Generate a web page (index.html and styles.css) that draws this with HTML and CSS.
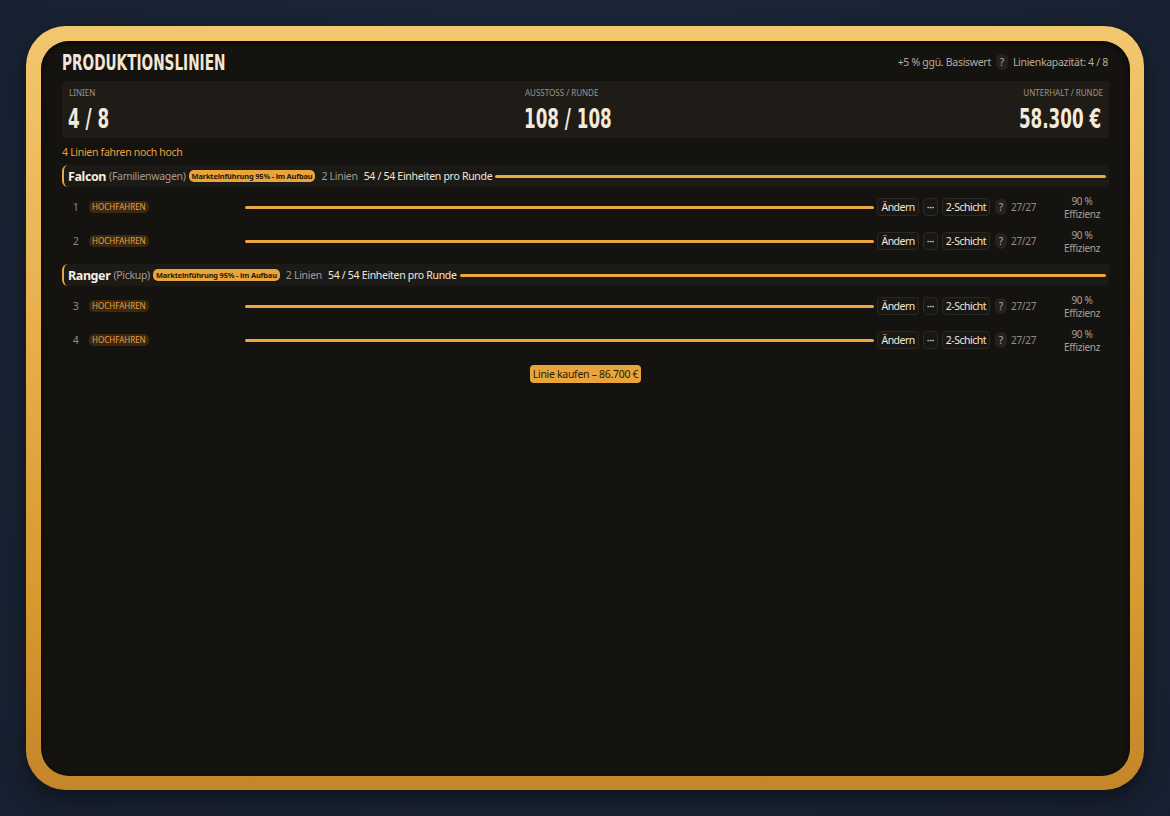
FILE: index.html
```html
<!DOCTYPE html>
<html lang="de">
<head>
<meta charset="utf-8">
<title>Produktionslinien</title>
<link rel="stylesheet" href="styles.css">
</head>
<body>
<div class="frame">
  <div class="panel">
    <header class="head">
      <h1 class="title"><span>PRODUKTIONSLINIEN</span></h1>
      <div class="head-meta">
        <span>+5 % ggü. Basiswert</span>
        <span class="q">?</span>
        <span>Linienkapazität: 4 / 8</span>
      </div>
    </header>

    <section class="stats">
      <div class="stat left">
        <div class="stat-label">LINIEN</div>
        <div class="stat-value"><span>4 / 8</span></div>
      </div>
      <div class="stat center">
        <div class="stat-label">AUSSTOSS / RUNDE</div>
        <div class="stat-value"><span>108 / 108</span></div>
      </div>
      <div class="stat right">
        <div class="stat-label">UNTERHALT / RUNDE</div>
        <div class="stat-value"><span>58.300 €</span></div>
      </div>
    </section>

    <div class="notice">4 Linien fahren noch hoch</div>

    <div class="list">
      <div class="group">
        <b class="g-name">Falcon</b>
        <span class="g-type">(Familienwagen)</span>
        <span class="g-badge">Markteinführung 95% - im Aufbau</span>
        <span class="g-count">2 Linien</span>
        <span class="g-out">54 / 54 Einheiten pro Runde</span>
        <span class="g-bar"></span>
      </div>
      <div class="line">
        <span class="l-num">1</span>
        <span class="l-status"><span class="l-badge">HOCHFAHREN</span></span>
        <span class="l-bar"></span>
        <span class="btn">Ändern</span>
        <span class="btn">···</span>
        <span class="btn">2-Schicht</span>
        <span class="q">?</span>
        <span class="l-cap">27/27</span>
        <span class="l-eff">90 %<br>Effizienz</span>
      </div>
      <div class="line">
        <span class="l-num">2</span>
        <span class="l-status"><span class="l-badge">HOCHFAHREN</span></span>
        <span class="l-bar"></span>
        <span class="btn">Ändern</span>
        <span class="btn">···</span>
        <span class="btn">2-Schicht</span>
        <span class="q">?</span>
        <span class="l-cap">27/27</span>
        <span class="l-eff">90 %<br>Effizienz</span>
      </div>

      <div class="group second">
        <b class="g-name">Ranger</b>
        <span class="g-type">(Pickup)</span>
        <span class="g-badge">Markteinführung 95% - im Aufbau</span>
        <span class="g-count">2 Linien</span>
        <span class="g-out">54 / 54 Einheiten pro Runde</span>
        <span class="g-bar"></span>
      </div>
      <div class="line">
        <span class="l-num">3</span>
        <span class="l-status"><span class="l-badge">HOCHFAHREN</span></span>
        <span class="l-bar"></span>
        <span class="btn">Ändern</span>
        <span class="btn">···</span>
        <span class="btn">2-Schicht</span>
        <span class="q">?</span>
        <span class="l-cap">27/27</span>
        <span class="l-eff">90 %<br>Effizienz</span>
      </div>
      <div class="line">
        <span class="l-num">4</span>
        <span class="l-status"><span class="l-badge">HOCHFAHREN</span></span>
        <span class="l-bar"></span>
        <span class="btn">Ändern</span>
        <span class="btn">···</span>
        <span class="btn">2-Schicht</span>
        <span class="q">?</span>
        <span class="l-cap">27/27</span>
        <span class="l-eff">90 %<br>Effizienz</span>
      </div>
    </div>

    <div class="buy-row">
      <span class="buy">Linie kaufen – 86.700 €</span>
    </div>
  </div>
</div>
</body>
</html>
```

FILE: styles.css
```css
* { box-sizing: border-box; }
html, body { height: 100%; }
body {
  margin: 0;
  background: radial-gradient(ellipse at 50% 40%, #1e2a3c 0%, #1a2434 60%, #172030 100%);
  font-family: "Noto Sans", "Open Sans", sans-serif;
  color: #f2e8d8;
  padding: 26px 26px 0 26px;
  letter-spacing: -0.3px;
}
.frame {
  width: 1118px;
  height: 764px;
  border-radius: 40px;
  background: linear-gradient(180deg, #f2c76e 0%, #e9b250 35%, #d8992f 75%, #c4862a 100%);
  padding: 15px 14px 14px 15px;
  box-shadow: 0 8px 24px rgba(0,0,0,0.45);
}
.panel {
  height: 100%;
  border-radius: 28px;
  background: #151310;
  box-shadow: inset 0 2px 6px rgba(0,0,0,0.6);
  padding: 9px 21px 0 21px;
}
.head {
  display: flex;
  align-items: center;
  justify-content: space-between;
  height: 24px;
}
.title {
  margin: 0;
  font-family: "Liberation Sans Narrow", "DejaVu Sans Condensed", sans-serif;
  font-weight: 700;
  font-size: 22px;
  line-height: 24px;
  color: #f2e6d6;
  white-space: nowrap;
  letter-spacing: 0;
  padding-top: 2px;
}
.title span {
  display: inline-block;
  transform: scaleX(0.69);
  transform-origin: left center;
}
.head-meta {
  display: flex;
  align-items: center;
  gap: 5px;
  font-size: 10.5px;
  color: #b5ac9e;
  padding-right: 1px;
}
.q {
  display: inline-flex;
  align-items: center;
  justify-content: center;
  width: 12px;
  height: 16px;
  border-radius: 6px 6px 7px 7px;
  background: #25221e;
  color: #b5ac9e;
  font-size: 10px;
  letter-spacing: 0;
}
.stats {
  margin-top: 7px;
  display: flex;
  justify-content: space-between;
  background: #1f1c18;
  border-radius: 4px;
  padding: 6px 6px 5px 6px;
  height: 57px;
}
.stat.left { width: 44px; }
.stat.center { width: 85px; }
.stat.right { width: 82px; text-align: right; }
.stat-label {
  font-size: 8px;
  line-height: 12px;
  color: #9e958a;
  letter-spacing: 0;
  padding-left: 1px;
  white-space: nowrap;
}
.stat-value {
  display: flex;
  font-family: "Liberation Sans Narrow", "DejaVu Sans Condensed", sans-serif;
  font-weight: 700;
  font-size: 27px;
  line-height: 32px;
  margin-top: 4px;
  color: #f4ead9;
  white-space: nowrap;
  letter-spacing: 0;
}
.stat-value span {
  flex: none;
  display: inline-block;
  transform: scaleX(0.69);
  transform-origin: left center;
}
.stat.right .stat-value { justify-content: flex-end; }
.stat.right .stat-value span { transform-origin: right center; margin-right: 2px; }
.notice {
  margin-top: 7px;
  font-size: 10.5px;
  line-height: 15px;
  color: #eaa13c;
}
.list {
  margin-top: 5px;
  display: flex;
  flex-direction: column;
  gap: 6px;
}
.group {
  display: flex;
  align-items: center;
  height: 22px;
  background: #1c1a16;
  border-left: 2px solid #eaa53e;
  border-radius: 6px 3px 3px 6px;
  padding: 0 3px 0 4px;
  white-space: nowrap;
}
.group.second { margin-top: 3px; }
.g-name { font-size: 12.5px; font-weight: 700; color: #f6eee0; letter-spacing: -0.4px; }
.g-type { font-size: 10.5px; color: #a49b8e; margin-left: 3px; }
.g-badge {
  margin-left: 3px;
  background: #e9a53c;
  color: #2a1a06;
  font-size: 7.5px;
  font-weight: 700;
  padding: 1px 3px;
  border-radius: 5px;
  line-height: 10px;
  letter-spacing: -0.2px;
}
.g-count { font-size: 10.5px; color: #a49b8e; margin-left: 6px; }
.g-out { font-size: 10.5px; color: #f2e8d8; margin-left: 6px; }
.g-bar {
  flex: 1;
  height: 3px;
  margin-left: 3px;
  background: #eba63e;
  border-radius: 2px;
}
.line {
  display: flex;
  align-items: center;
  height: 28px;
  padding: 0 2px 0 11px;
  white-space: nowrap;
}
.l-num { width: 16px; font-size: 10px; color: #958c80; }
.l-status { width: 156px; display: flex; align-items: center; }
.l-badge {
  display: inline-block;
  background: #3a2811;
  color: #e5a044;
  font-size: 8px;
  line-height: 12px;
  padding: 0 3px;
  border-radius: 5px;
  letter-spacing: 0;
}
.l-bar {
  flex: 1;
  height: 3px;
  background: #eba63e;
  border-radius: 2px;
  margin-right: 3px;
}
.btn {
  display: inline-flex;
  align-items: center;
  height: 18px;
  padding: 0 3px;
  margin-right: 4px;
  border: 1px solid #2c2823;
  border-radius: 4px;
  background: #191714;
  font-size: 10.5px;
  letter-spacing: -0.5px;
  color: #f2e8d8;
}
.line .q { margin-left: 1px; }
.l-cap { width: 46px; margin-left: 4px; font-size: 10px; color: #958c80; }
.l-eff {
  width: 50px;
  text-align: center;
  font-size: 10px;
  line-height: 13px;
  color: #a9a093;
  padding-top: 2px;
}
.buy-row {
  display: flex;
  justify-content: center;
  margin-top: 11px;
}
.buy {
  background: #e9a53c;
  color: #2a1a06;
  font-size: 10.5px;
  line-height: 18px;
  padding: 0 3px;
  border-radius: 4px;
}
```
